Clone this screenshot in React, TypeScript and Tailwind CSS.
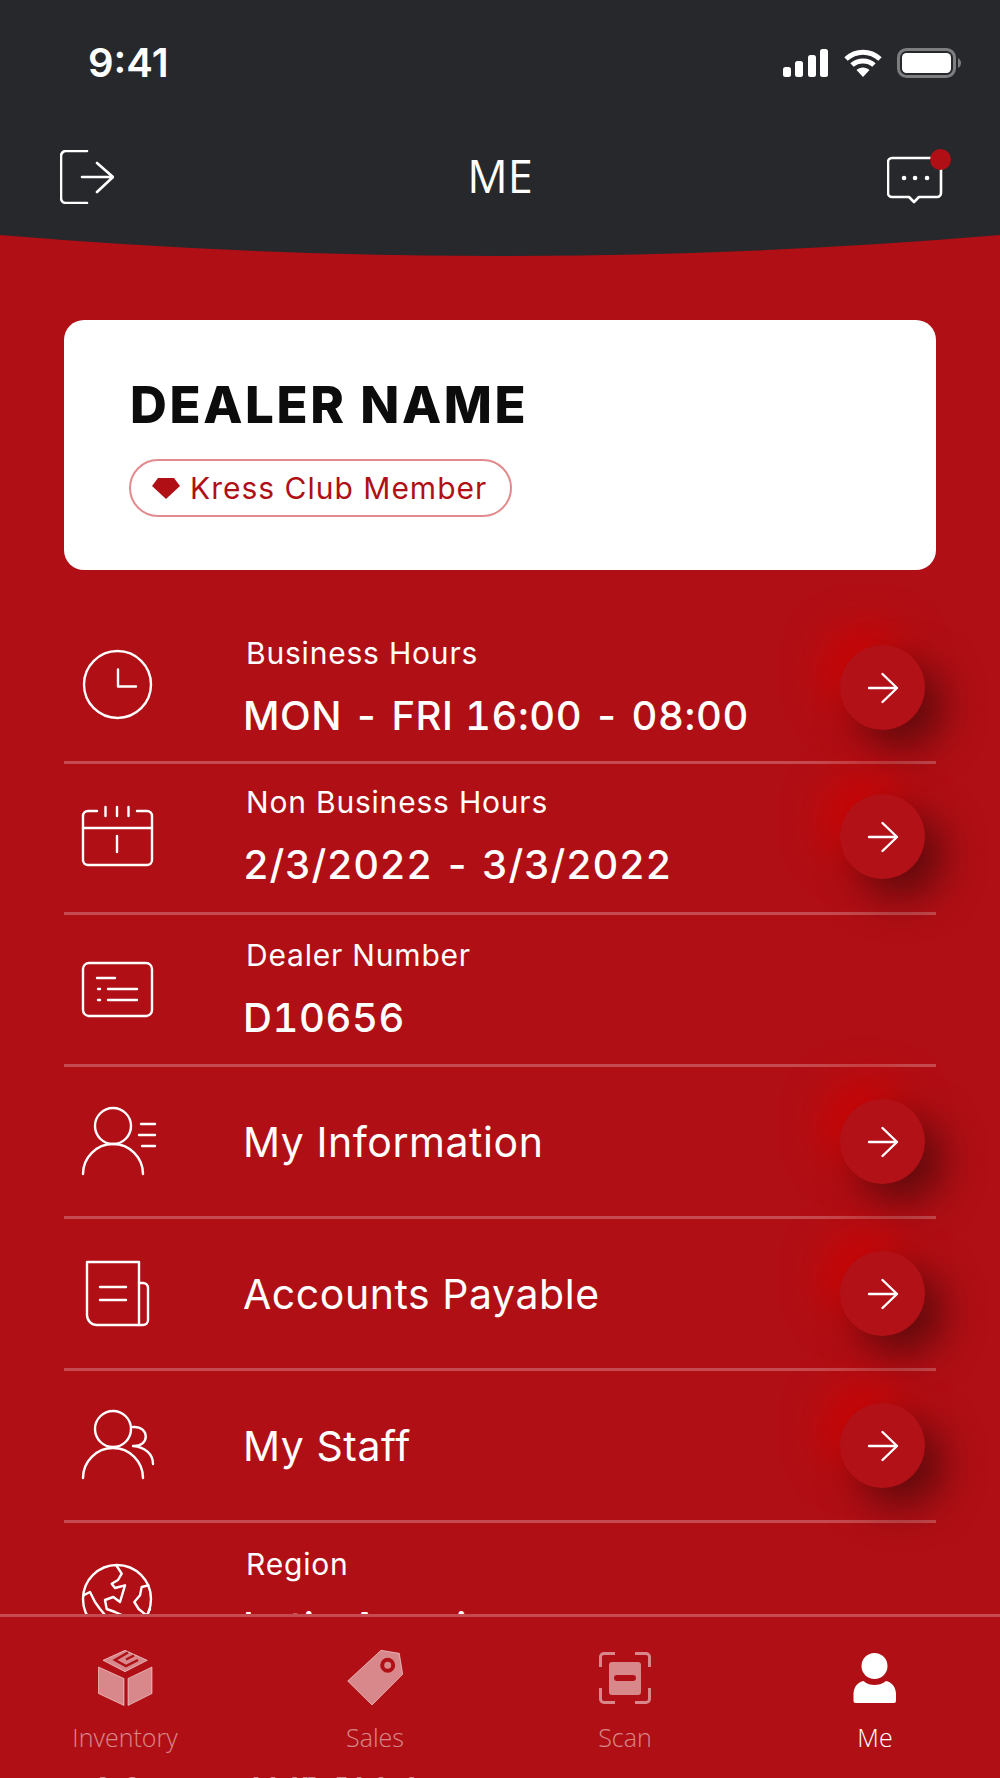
import React from "react";

const S = "fill-none stroke-white stroke-[2.4] [stroke-linecap:round] [stroke-linejoin:round]";

const Clock = () => (
  <svg width="80" height="80" viewBox="0 0 80 80" className={S}>
    <circle cx="40.500" cy="36.500" r="33.500" />
    <path d="M41 21.500V38.500H59" />
  </svg>
);
const Calendar = () => (
  <svg width="80" height="80" viewBox="0 0 80 80" className={S}>
    <path d="M20 14H11a5 5 0 0 0-5 5V63a5 5 0 0 0 5 5H70a5 5 0 0 0 5-5V19a5 5 0 0 0-5-5H60" />
    <path d="M6 31H75M28.500 10V19M40 10V19M51.500 10V19M40 39V55" />
  </svg>
);
const IdCard = () => (
  <svg width="80" height="80" viewBox="0 0 80 80" className={S}>
    <rect x="6" y="13" width="69" height="53" rx="6" />
    <path d="M20 28H38M21 39H23M31 39H60M21 50H23M31 50H60" />
  </svg>
);
const UserInfo = () => (
  <svg width="80" height="80" viewBox="0 0 80 80" className={S}>
    <circle cx="36" cy="24" r="18" />
    <path d="M6 72A30 30 0 0 1 66 72M64 22H78M62 33H78M65 44H78" />
  </svg>
);
const Paper = () => (
  <svg width="80" height="80" viewBox="0 0 80 80" className={S}>
    <path d="M10 8H62V71H20a10 10 0 0 1-10-10Z" />
    <path d="M62 29H66a5 5 0 0 1 5 5V66a5 5 0 0 1-5 5H62M23 33H49M23 46H49" />
  </svg>
);
const Staff = () => (
  <svg width="80" height="80" viewBox="0 0 80 80" className={S}>
    <circle cx="36" cy="23" r="18" />
    <path d="M6 72A30 30 0 0 1 66 72M56 21C73 20 73 41 56 40C68 41 76 48 76 58" />
  </svg>
);
const Globe = () => (
  <svg width="80" height="80" viewBox="0 0 80 80" className={S}>
    <circle cx="40" cy="40" r="34" />
    <path d="M39.700 7L44.700 14.700L41 21L34.700 24.700L38 29L48 26.300L43 43L36.300 38L28 41L29.700 50L38 53L45 56L51.300 59L53 70" />
    <path d="M6.300 36.300L13 33L18 43L23 50L29.700 58L29 64L36 72" />
    <path d="M71.300 26.300L64.700 28L63 36.300L57.300 43L61.700 50L69.700 56.700L73 50" />
  </svg>
);

const ArrowBtn = () => (
  <div className="ml-auto mr-[11px] w-[85px] h-[85px] shrink-0 rounded-full bg-[#B21118] flex items-center justify-center shadow-[18px_18px_40px_#5e0a0c,-16px_-16px_40px_#d00505]">
    <svg width="32" height="32" viewBox="0 0 32 32" className={S}>
      <path d="M2 16H30M15.500 2L30 16L15.500 30" />
    </svg>
  </div>
);

type RowProps = {
  icon: React.ReactNode;
  label?: string;
  value: string;
  arrow?: boolean;
  last?: boolean;
  className?: string;
};

const Row = ({ icon, label, value, arrow, last, className = "h-[152px]" }: RowProps) => (
  <div className={`shrink-0 flex items-center ${className} ${last ? "" : "border-b-[3px] border-white/25"}`}>
    <div className="w-[179px] shrink-0 pl-[13px]">{icon}</div>
    {label ? (
      <div className="flex flex-col text-white whitespace-nowrap">
        <div className="text-[30px] leading-[34px] pl-[3px] tracking-[0.8px]">{label}</div>
        <div className="text-[40px] leading-[48px] mt-[22px] font-medium tracking-[0.6px] tabular-nums">{value}</div>
      </div>
    ) : (
      <div className="text-white text-[41px] leading-[48px] tracking-[0.55px]">{value}</div>
    )}
    {arrow && <ArrowBtn />}
  </div>
);

const Tab = ({ icon, label, active }: { icon: React.ReactNode; label: string; active?: boolean }) => (
  <div className="flex flex-col items-center">
    <div className="h-[60px] flex items-center justify-center mt-[31px]">{icon}</div>
    <div className={`mt-[13px] text-[25px] leading-[32px] font-['Open_Sans',sans-serif] font-light ${active ? "text-white" : "text-white/50"}`}>
      {label}
    </div>
  </div>
);

export default function App() {
  return (
    <div className="relative w-[1000px] h-[1778px] overflow-hidden bg-[#B00F15] font-['Inter',sans-serif]">
      {/* header */}
      <div className="h-[235px] bg-[#27282C] flex flex-col">
        <div className="h-[126px] flex items-center justify-between pl-[88px] pr-[38px] shrink-0">
          <div className="text-white text-[40px] leading-[48px] font-semibold">9:41</div>
          <div className="flex items-center gap-[14px]">
            <svg width="46" height="28" viewBox="0 0 46 28" className="fill-white">
              <rect x="0" y="18" width="8" height="10" rx="2.500" />
              <rect x="12" y="12" width="8" height="16" rx="2.500" />
              <rect x="25" y="6" width="8" height="22" rx="2.500" />
              <rect x="37" y="0" width="8" height="28" rx="2.500" />
            </svg>
            <svg width="40" height="28" viewBox="0 0 40 28">
              <path d="M3 10C13 1 27 1 37 10M9 16C15 10.500 25 10.500 31 16" className="fill-none stroke-white stroke-[5]" />
              <path d="M13.500 21C17 17.500 23 17.500 26.500 21L20 28Z" className="fill-white" />
            </svg>
            <svg width="65" height="30" viewBox="0 0 65 30">
              <rect x="1.500" y="1.500" width="56" height="27" rx="8" className="fill-none stroke-white/40 stroke-[3]" />
              <rect x="5" y="5" width="49" height="20" rx="4.500" className="fill-white" />
              <path d="M61 10C65 12 65 18 61 20Z" className="fill-white/40" />
            </svg>
          </div>
        </div>
        <div className="flex items-center justify-between h-[60px] pl-[60px] pr-[47px] mt-[21px] shrink-0">
          <svg width="54" height="54" viewBox="0 0 54 54" className={S + " stroke-[2.6]"}>
            <path d="M27 1H6a5 5 0 0 0-5 5V48a5 5 0 0 0 5 5H27M22 27H53M37 13L53 27L37 42" />
          </svg>
          <div className="text-white text-[45px] leading-[60px] font-['Open_Sans',sans-serif] font-normal -ml-[1px] -mt-[3px]">ME</div>
          <div className="relative w-[66px] h-[60px]">
            <svg width="66" height="60" viewBox="0 0 66 60" className={S + " stroke-[2.6]"}>
              <path d="M5 11H50a4 4 0 0 1 4 4V46a4 4 0 0 1-4 4H32L27 55L22 50H5a4 4 0 0 1-4-4V15a4 4 0 0 1 4-4Z" />
              <path d="M17 31H17.100M28 31H28.100M40 31H40.100" className="stroke-[4.500]" />
            </svg>
            <div className="absolute left-[43px] top-[2px] w-[21px] h-[21px] rounded-full bg-[#B00F15]" />
          </div>
        </div>
      </div>
      <svg width="1000" height="21" viewBox="0 0 1000 21" className="block">
        <path d="M0 0H1000Q500 42 0 0Z" className="fill-[#27282C]" />
      </svg>

      {/* body */}
      <div className="px-[64px] mt-[64px] flex flex-col">
        <div className="h-[250px] rounded-[20px] bg-white pl-[66px] pt-[55px]">
          <div className="text-[#0C0C0C] text-[51px] leading-[60px] font-extrabold tracking-[2.6px] whitespace-nowrap">DEALER NAME</div>
          <div className="-ml-[1px] mt-[24px] w-[383px] h-[58px] rounded-full border-2 border-[#E08C8E] flex items-center pl-[21px] text-[#B00F15]">
            <svg width="28" height="24" viewBox="0 0 28 24" className="fill-[#B00F15] shrink-0">
              <path d="M6 2H22L28 10L14 23L0 10Z" />
            </svg>
            <span className="ml-[10px] text-[30px] leading-[36px] whitespace-nowrap tracking-[1px]">Kress Club Member</span>
          </div>
        </div>
        <div className="mt-[41px] flex flex-col">
          <Row icon={<Clock />} label="Business Hours" value="MON - FRI 16:00 - 08:00" arrow className="h-[153px] pt-[3px]" />
          <Row icon={<Calendar />} label="Non Business Hours" value="2/3/2022 - 3/3/2022" arrow className="h-[151px] pb-[3px]" />
          <Row icon={<IdCard />} label="Dealer Number" value="D10656" />
          <Row icon={<UserInfo />} value="My Information" arrow />
          <Row icon={<Paper />} value="Accounts Payable" arrow />
          <Row icon={<Staff />} value="My Staff" arrow />
          <Row icon={<Globe />} label="Region" value="Latin America" last />
          <div className="opacity-50">
            <Row icon={<Clock />} label="Time Zone" value="TOKYO 1" last />
          </div>
        </div>
      </div>

      {/* tab bar */}
      <div className="absolute inset-x-0 top-[1614px] h-[163px] border-t-[3px] border-white/25 bg-[#B00F15] grid grid-cols-4">
        <Tab
          label="Inventory"
          icon={
            <svg width="56" height="58" viewBox="0 0 56 58">
              <path d="M1.500 18L27 29.500V56.500L1.500 44.500Z M55 18L31 29.500V56.500L55 44.500Z M6 11.300L28 1.300L50.300 11.300L28 22.700Z" className="fill-white/50 stroke-white/50 stroke-1 [stroke-linejoin:round]" />
              <path d="M31 3.500L18 11L29 17L41 11M29 10.500L37 6.500" className="fill-none stroke-[#B00F15] stroke-[2.5]" />
            </svg>
          }
        />
        <Tab
          label="Sales"
          icon={
            <svg width="56" height="58" viewBox="0 0 56 58">
              <path d="M34 1.300L52.300 4.300L55.700 25.300L25 56L0.700 32Z" className="fill-white/50 stroke-white/50 stroke-1 [stroke-linejoin:round]" />
              <circle cx="40.700" cy="16.300" r="5.500" className="fill-none stroke-[#B00F15] stroke-[4]" />
            </svg>
          }
        />
        <Tab
          label="Scan"
          icon={
            <svg width="52" height="52" viewBox="0 0 52 52">
              <path d="M1.500 15V5a3.500 3.500 0 0 1 3.500-3.500H16M36 1.500H47a3.500 3.500 0 0 1 3.500 3.500V15M50.500 36V47a3.500 3.500 0 0 1-3.500 3.500H36M16 50.500H5a3.500 3.500 0 0 1-3.500-3.500V36" className="fill-none stroke-white/50 stroke-[3]" />
              <path fillRule="evenodd" d="M13 10H39a3 3 0 0 1 3 3V40a3 3 0 0 1-3 3H13a3 3 0 0 1-3-3V13a3 3 0 0 1 3-3ZM18 23a3 3 0 0 0 0 6H34a3 3 0 0 0 0-6Z" className="fill-white/50" />
            </svg>
          }
        />
        <Tab
          label="Me"
          active
          icon={
            <svg width="44" height="52" viewBox="0 0 44 52" className="fill-white">
              <circle cx="21.500" cy="14" r="13" />
              <path d="M0.500 49V42C0.500 35 5 30 10.500 29C14 32 18 33 21.500 33C25 33 29 32 33 29C38.500 30 43 35 43 42V49a2 2 0 0 1-2 2H2.500a2 2 0 0 1-2-2Z" />
            </svg>
          }
        />
      </div>
    </div>
  );
}
